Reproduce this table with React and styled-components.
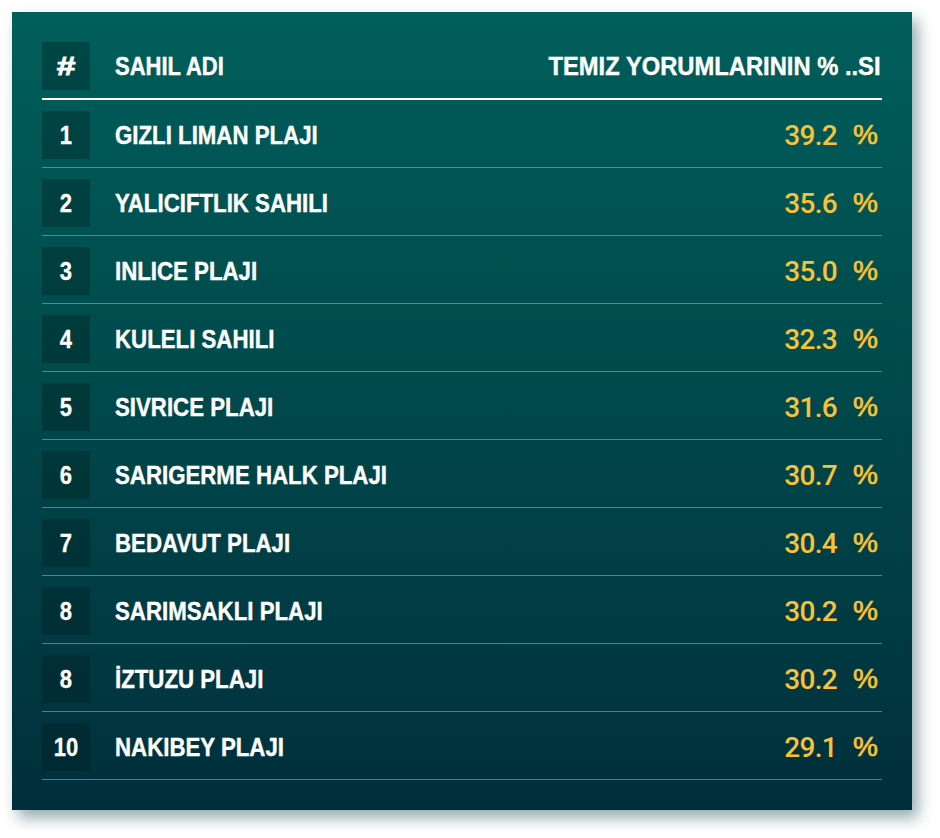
import React from "react";
import styled, { createGlobalStyle } from "styled-components";

const Global = createGlobalStyle`
  html, body { margin: 0; padding: 0; background: #ffffff; }
  body { width: 940px; height: 838px; overflow: hidden; }
`;

const Page = styled.div`
  padding: 12px 28px 28px 12px;
`;

const Card = styled.div`
  width: 900px;
  height: 798px;
  box-sizing: border-box;
  padding: 30px 30px 0 30px;
  background: linear-gradient(180deg, #005f5b 0%, #004a4c 45%, #002f3c 100%);
  box-shadow: 6px 8px 14px rgba(20, 70, 80, 0.45);
`;

const Row = styled.div`
  display: flex;
  align-items: center;
  height: 48px;
  padding-bottom: 8px;
  margin-bottom: 11px;
  border-bottom: ${(p) =>
    p.$header ? "2px solid #ffffff" : "1px solid rgba(150, 190, 190, 0.55)"};
`;

const NumBox = styled.div`
  width: 48px;
  height: 48px;
  flex: none;
  display: flex;
  align-items: center;
  justify-content: center;
  background: rgba(0, 30, 30, 0.35);
  color: #ffffff;
  font-family: "Liberation Sans", Arial, sans-serif;
  font-weight: 700;
  font-size: ${(p) => (p.$header ? "26px" : "25px")};
  -webkit-text-stroke: ${(p) => (p.$header ? "0.8px" : "0.3px")} #ffffff;
`;

const Cond = styled.span`
  display: inline-block;
  white-space: nowrap;
  transform: scaleX(${(p) => p.$sx || 0.88});
  transform-origin: ${(p) => p.$origin || "left"} center;
`;

const Name = styled.div`
  flex: 1;
  margin-left: 25px;
  color: #ffffff;
  font-family: "Liberation Sans", Arial, sans-serif;
  font-weight: 700;
  font-size: 25px;
  -webkit-text-stroke: 0.4px #ffffff;
`;

const HeadRight = styled(Name)`
  flex: none;
  margin-left: 0;
  padding-right: 1px;
`;

const Pct = styled.div`
  display: flex;
  align-items: center;
  gap: 16px;
  color: #f8c237;
  padding-right: 4px;
`;

const Value = styled.span`
  font-family: "Roboto", "Liberation Sans", sans-serif;
  font-size: 28px;
  font-weight: 500;
  letter-spacing: -0.7px;
`;

const Sign = styled.span`
  font-family: "Liberation Sans", Arial, sans-serif;
  font-size: 28px;
  font-weight: 400;
  -webkit-text-stroke: 0.7px #f8c237;
`;

const data = [
  ["1", "GIZLI LIMAN PLAJI", "39.2"],
  ["2", "YALICIFTLIK SAHILI", "35.6"],
  ["3", "INLICE PLAJI", "35.0"],
  ["4", "KULELI SAHILI", "32.3"],
  ["5", "SIVRICE PLAJI", "31.6"],
  ["6", "SARIGERME HALK PLAJI", "30.7"],
  ["7", "BEDAVUT PLAJI", "30.4"],
  ["8", "SARIMSAKLI PLAJI", "30.2"],
  ["8", "İZTUZU PLAJI", "30.2"],
  ["10", "NAKIBEY PLAJI", "29.1"],
];

export default function App() {
  return (
    <>
      <Global />
      <Page>
        <Card>
          <Row $header>
            <NumBox $header>
              <Cond $sx={1.3} $origin="center">#</Cond>
            </NumBox>
            <Name>
              <Cond $sx={0.88}>SAHIL ADI</Cond>
            </Name>
            <HeadRight>
              <Cond $sx={0.95} $origin="right">TEMIZ YORUMLARININ % ..SI</Cond>
            </HeadRight>
          </Row>
          {data.map(([n, name, v], i) => (
            <Row key={i}>
              <NumBox>
                <Cond $sx={0.88} $origin="center">{n}</Cond>
              </NumBox>
              <Name>
                <Cond $sx={0.89}>{name}</Cond>
              </Name>
              <Pct>
                <Value>{v}</Value>
                <Sign>%</Sign>
              </Pct>
            </Row>
          ))}
        </Card>
      </Page>
    </>
  );
}
